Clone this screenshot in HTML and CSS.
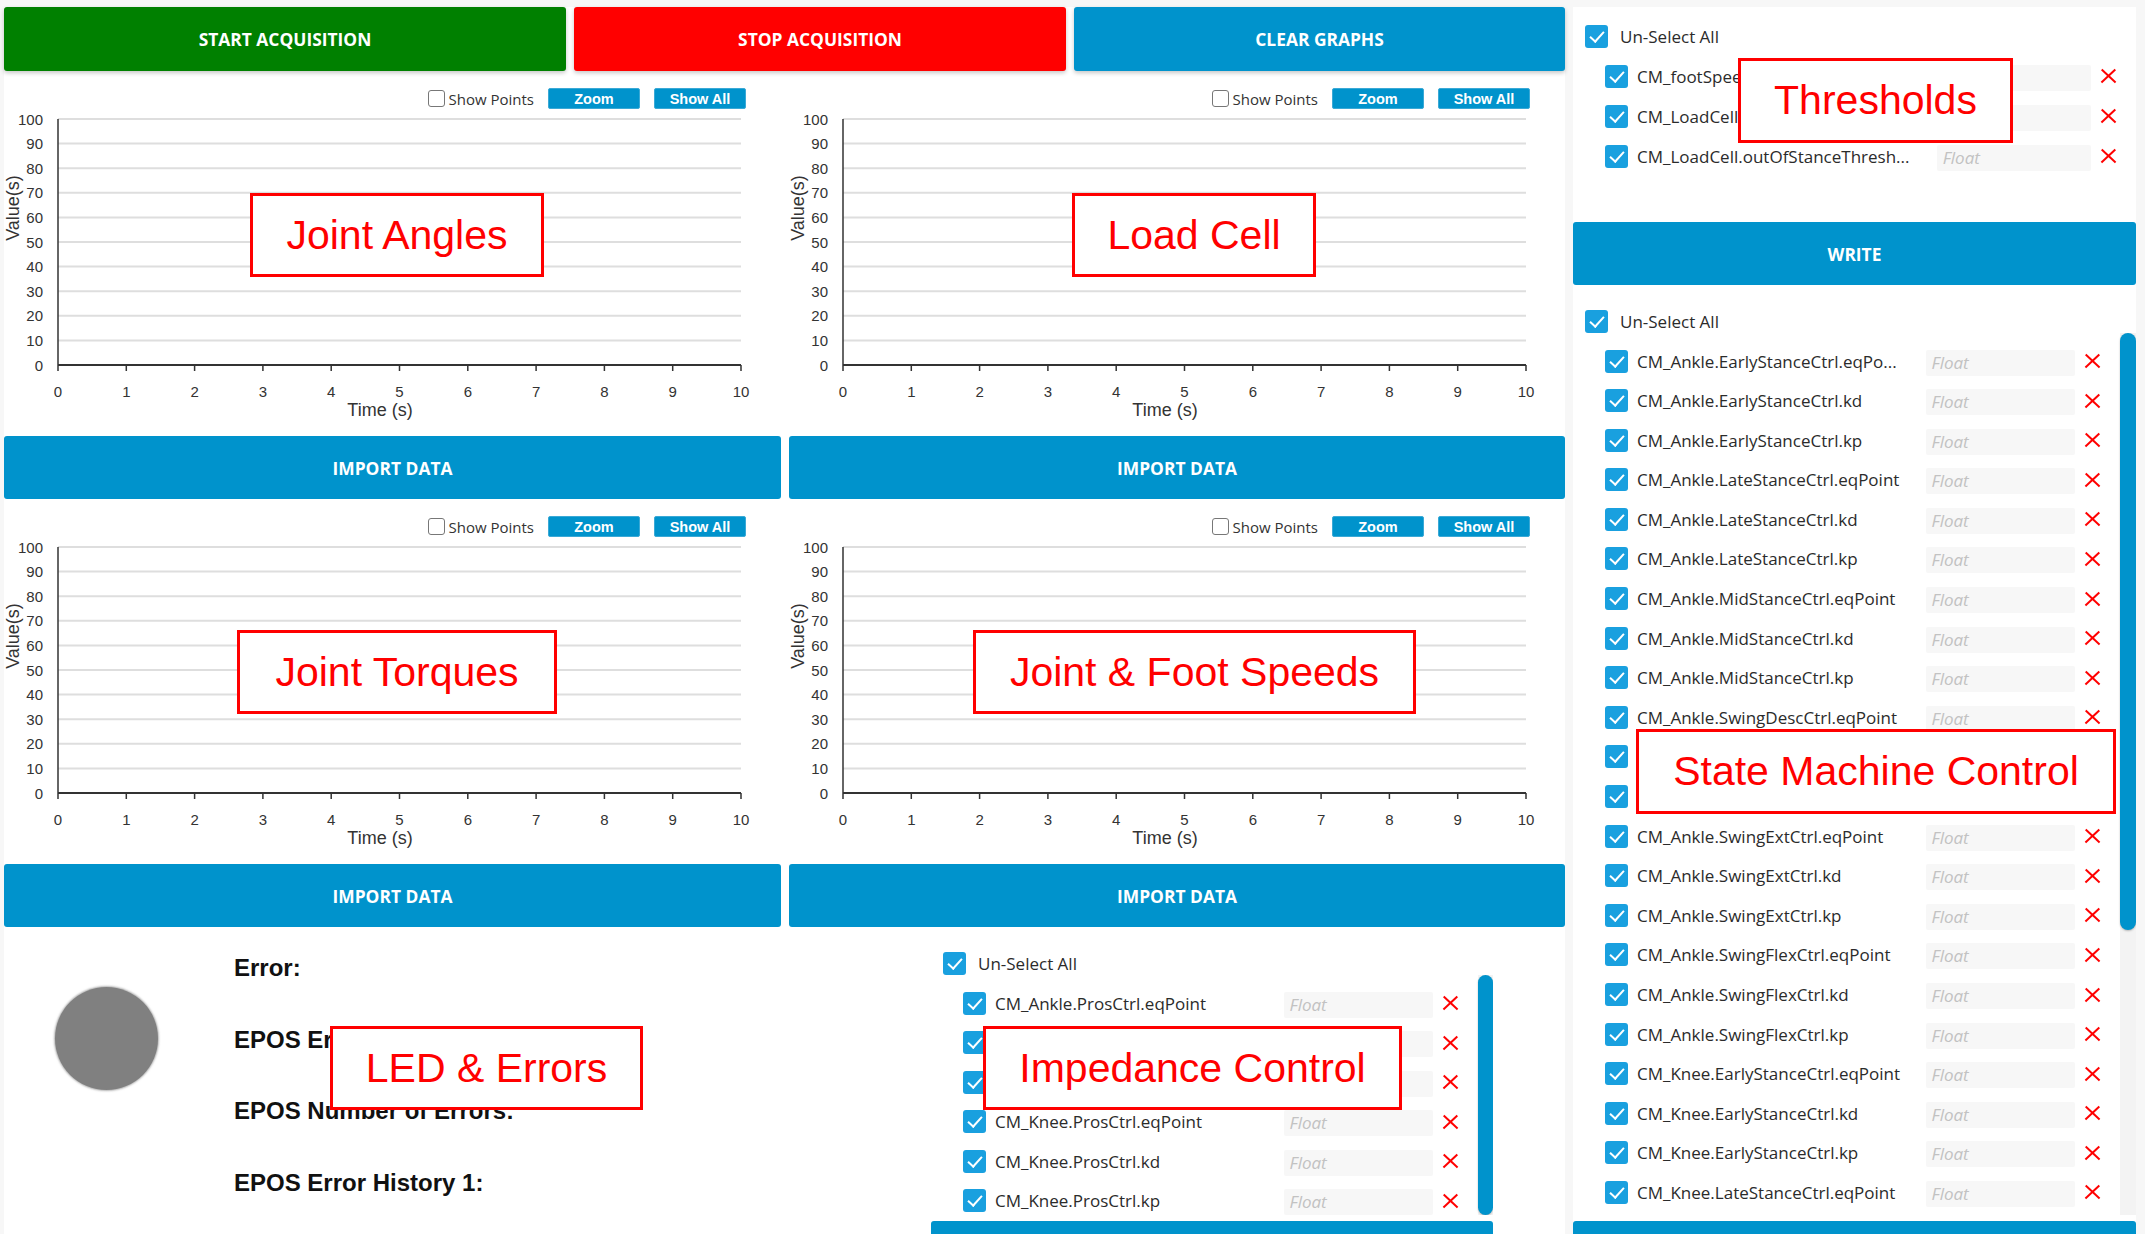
FILE: index.html
```html
<!DOCTYPE html>
<html lang="en">
<head>
<meta charset="utf-8">
<title>Acquisition Panel</title>
<link rel="stylesheet" href="styles.css">
</head>
<body>
<div class="app">
  <div class="left">
    <div class="topbar">
      <button class="btn top green w1">START ACQUISITION</button>
      <button class="btn top red w2">STOP ACQUISITION</button>
      <button class="btn top blue w3">CLEAR GRAPHS</button>
    </div>

    <div class="charts">
      <section class="cell">
        <div class="controls">
          <span class="sp-box"></span><span class="sp-label">Show Points</span>
          <button class="gbtn">Zoom</button><button class="gbtn">Show All</button>
        </div>
        <svg class="plot" width="777" height="327" viewBox="0 0 777 327">
          <path class="gridl" d="M54 10H737M54 34.6H737M54 59.2H737M54 83.8H737M54 108.4H737M54 133H737M54 157.6H737M54 182.2H737M54 206.8H737M54 231.4H737"/>
          <path class="yaxis" d="M54 10V256"/>
          <path class="xaxis" d="M54 256H737"/>
          <path class="ticks" d="M54 256V262M122.3 256V262M190.6 256V262M258.9 256V262M327.2 256V262M395.5 256V262M463.8 256V262M532.1 256V262M600.4 256V262M668.7 256V262M737 256V262"/>
          <g class="ylab"><text x="39" y="15.5">100</text><text x="39" y="40.1">90</text><text x="39" y="64.7">80</text><text x="39" y="89.3">70</text><text x="39" y="113.9">60</text><text x="39" y="138.5">50</text><text x="39" y="163.1">40</text><text x="39" y="187.7">30</text><text x="39" y="212.3">20</text><text x="39" y="236.9">10</text><text x="39" y="261.5">0</text></g>
          <g class="xlab"><text x="54" y="288">0</text><text x="122.3" y="288">1</text><text x="190.6" y="288">2</text><text x="258.9" y="288">3</text><text x="327.2" y="288">4</text><text x="395.5" y="288">5</text><text x="463.8" y="288">6</text><text x="532.1" y="288">7</text><text x="600.4" y="288">8</text><text x="668.7" y="288">9</text><text x="737" y="288">10</text></g>
          <text class="title" x="376" y="307">Time (s)</text>
          <text class="title" transform="translate(15 99) rotate(-90)">Value(s)</text>
        </svg>
        <button class="btn blue import">IMPORT DATA</button>
      </section>

      <section class="cell">
        <div class="controls">
          <span class="sp-box"></span><span class="sp-label">Show Points</span>
          <button class="gbtn">Zoom</button><button class="gbtn">Show All</button>
        </div>
        <svg class="plot" width="776" height="327" viewBox="0 0 776 327">
          <path class="gridl" d="M54 10H737M54 34.6H737M54 59.2H737M54 83.8H737M54 108.4H737M54 133H737M54 157.6H737M54 182.2H737M54 206.8H737M54 231.4H737"/>
          <path class="yaxis" d="M54 10V256"/>
          <path class="xaxis" d="M54 256H737"/>
          <path class="ticks" d="M54 256V262M122.3 256V262M190.6 256V262M258.9 256V262M327.2 256V262M395.5 256V262M463.8 256V262M532.1 256V262M600.4 256V262M668.7 256V262M737 256V262"/>
          <g class="ylab"><text x="39" y="15.5">100</text><text x="39" y="40.1">90</text><text x="39" y="64.7">80</text><text x="39" y="89.3">70</text><text x="39" y="113.9">60</text><text x="39" y="138.5">50</text><text x="39" y="163.1">40</text><text x="39" y="187.7">30</text><text x="39" y="212.3">20</text><text x="39" y="236.9">10</text><text x="39" y="261.5">0</text></g>
          <g class="xlab"><text x="54" y="288">0</text><text x="122.3" y="288">1</text><text x="190.6" y="288">2</text><text x="258.9" y="288">3</text><text x="327.2" y="288">4</text><text x="395.5" y="288">5</text><text x="463.8" y="288">6</text><text x="532.1" y="288">7</text><text x="600.4" y="288">8</text><text x="668.7" y="288">9</text><text x="737" y="288">10</text></g>
          <text class="title" x="376" y="307">Time (s)</text>
          <text class="title" transform="translate(15 99) rotate(-90)">Value(s)</text>
        </svg>
        <button class="btn blue import">IMPORT DATA</button>
      </section>

      <section class="cell">
        <div class="controls">
          <span class="sp-box"></span><span class="sp-label">Show Points</span>
          <button class="gbtn">Zoom</button><button class="gbtn">Show All</button>
        </div>
        <svg class="plot" width="777" height="327" viewBox="0 0 777 327">
          <path class="gridl" d="M54 10H737M54 34.6H737M54 59.2H737M54 83.8H737M54 108.4H737M54 133H737M54 157.6H737M54 182.2H737M54 206.8H737M54 231.4H737"/>
          <path class="yaxis" d="M54 10V256"/>
          <path class="xaxis" d="M54 256H737"/>
          <path class="ticks" d="M54 256V262M122.3 256V262M190.6 256V262M258.9 256V262M327.2 256V262M395.5 256V262M463.8 256V262M532.1 256V262M600.4 256V262M668.7 256V262M737 256V262"/>
          <g class="ylab"><text x="39" y="15.5">100</text><text x="39" y="40.1">90</text><text x="39" y="64.7">80</text><text x="39" y="89.3">70</text><text x="39" y="113.9">60</text><text x="39" y="138.5">50</text><text x="39" y="163.1">40</text><text x="39" y="187.7">30</text><text x="39" y="212.3">20</text><text x="39" y="236.9">10</text><text x="39" y="261.5">0</text></g>
          <g class="xlab"><text x="54" y="288">0</text><text x="122.3" y="288">1</text><text x="190.6" y="288">2</text><text x="258.9" y="288">3</text><text x="327.2" y="288">4</text><text x="395.5" y="288">5</text><text x="463.8" y="288">6</text><text x="532.1" y="288">7</text><text x="600.4" y="288">8</text><text x="668.7" y="288">9</text><text x="737" y="288">10</text></g>
          <text class="title" x="376" y="307">Time (s)</text>
          <text class="title" transform="translate(15 99) rotate(-90)">Value(s)</text>
        </svg>
        <button class="btn blue import">IMPORT DATA</button>
      </section>

      <section class="cell">
        <div class="controls">
          <span class="sp-box"></span><span class="sp-label">Show Points</span>
          <button class="gbtn">Zoom</button><button class="gbtn">Show All</button>
        </div>
        <svg class="plot" width="776" height="327" viewBox="0 0 776 327">
          <path class="gridl" d="M54 10H737M54 34.6H737M54 59.2H737M54 83.8H737M54 108.4H737M54 133H737M54 157.6H737M54 182.2H737M54 206.8H737M54 231.4H737"/>
          <path class="yaxis" d="M54 10V256"/>
          <path class="xaxis" d="M54 256H737"/>
          <path class="ticks" d="M54 256V262M122.3 256V262M190.6 256V262M258.9 256V262M327.2 256V262M395.5 256V262M463.8 256V262M532.1 256V262M600.4 256V262M668.7 256V262M737 256V262"/>
          <g class="ylab"><text x="39" y="15.5">100</text><text x="39" y="40.1">90</text><text x="39" y="64.7">80</text><text x="39" y="89.3">70</text><text x="39" y="113.9">60</text><text x="39" y="138.5">50</text><text x="39" y="163.1">40</text><text x="39" y="187.7">30</text><text x="39" y="212.3">20</text><text x="39" y="236.9">10</text><text x="39" y="261.5">0</text></g>
          <g class="xlab"><text x="54" y="288">0</text><text x="122.3" y="288">1</text><text x="190.6" y="288">2</text><text x="258.9" y="288">3</text><text x="327.2" y="288">4</text><text x="395.5" y="288">5</text><text x="463.8" y="288">6</text><text x="532.1" y="288">7</text><text x="600.4" y="288">8</text><text x="668.7" y="288">9</text><text x="737" y="288">10</text></g>
          <text class="title" x="376" y="307">Time (s)</text>
          <text class="title" transform="translate(15 99) rotate(-90)">Value(s)</text>
        </svg>
        <button class="btn blue import">IMPORT DATA</button>
      </section>
    </div>

    <div class="bottom">
      <div class="status">
        <div class="led"></div>
        <div class="errors">
          <div class="err">Error:</div>
          <div class="err">EPOS Error:</div>
          <div class="err">EPOS Number of Errors:</div>
          <div class="err">EPOS Error History 1:</div>
        </div>
      </div>
      <div class="imp-col">
        <div class="panel imp">
          <div class="head"><span class="cb"></span><span class="head-label">Un-Select All</span></div>
          <div class="list imp-list">
            <div class="items">
              <div class="row"><span class="cb"></span><span class="lbl">CM_Ankle.ProsCtrl.eqPoint</span><span class="inp">Float</span><span class="x"></span></div>
              <div class="row"><span class="cb"></span><span class="lbl">CM_Ankle.ProsCtrl.kd</span><span class="inp">Float</span><span class="x"></span></div>
              <div class="row"><span class="cb"></span><span class="lbl">CM_Ankle.ProsCtrl.kp</span><span class="inp">Float</span><span class="x"></span></div>
              <div class="row"><span class="cb"></span><span class="lbl">CM_Knee.ProsCtrl.eqPoint</span><span class="inp">Float</span><span class="x"></span></div>
              <div class="row"><span class="cb"></span><span class="lbl">CM_Knee.ProsCtrl.kd</span><span class="inp">Float</span><span class="x"></span></div>
              <div class="row"><span class="cb"></span><span class="lbl">CM_Knee.ProsCtrl.kp</span><span class="inp">Float</span><span class="x"></span></div>
            </div>
            <div class="track imp-track"><div class="thumb imp-thumb"></div></div>
          </div>
          <button class="btn blue write">WRITE</button>
        </div>
      </div>
    </div>
  </div>

  <div class="right">
    <div class="panel thr">
      <div class="head thr-head"><span class="cb"></span><span class="head-label">Un-Select All</span></div>
      <div class="list thr-list">
        <div class="items">
          <div class="row r40"><span class="cb"></span><span class="lbl">CM_footSpeed.threshold</span><span class="inp">Float</span><span class="x"></span></div>
          <div class="row r40"><span class="cb"></span><span class="lbl">CM_LoadCell.inStanceThreshold</span><span class="inp">Float</span><span class="x"></span></div>
          <div class="row r40"><span class="cb"></span><span class="lbl">CM_LoadCell.outOfStanceThresh...</span><span class="inp">Float</span><span class="x"></span></div>
        </div>
      </div>
    </div>
    <button class="btn blue write">WRITE</button>
    <div class="panel sm">
      <div class="head"><span class="cb"></span><span class="head-label">Un-Select All</span></div>
      <div class="list sm-list">
        <div class="items">
          <div class="row"><span class="cb"></span><span class="lbl">CM_Ankle.EarlyStanceCtrl.eqPo...</span><span class="inp">Float</span><span class="x"></span></div>
          <div class="row"><span class="cb"></span><span class="lbl">CM_Ankle.EarlyStanceCtrl.kd</span><span class="inp">Float</span><span class="x"></span></div>
          <div class="row"><span class="cb"></span><span class="lbl">CM_Ankle.EarlyStanceCtrl.kp</span><span class="inp">Float</span><span class="x"></span></div>
          <div class="row"><span class="cb"></span><span class="lbl">CM_Ankle.LateStanceCtrl.eqPoint</span><span class="inp">Float</span><span class="x"></span></div>
          <div class="row"><span class="cb"></span><span class="lbl">CM_Ankle.LateStanceCtrl.kd</span><span class="inp">Float</span><span class="x"></span></div>
          <div class="row"><span class="cb"></span><span class="lbl">CM_Ankle.LateStanceCtrl.kp</span><span class="inp">Float</span><span class="x"></span></div>
          <div class="row"><span class="cb"></span><span class="lbl">CM_Ankle.MidStanceCtrl.eqPoint</span><span class="inp">Float</span><span class="x"></span></div>
          <div class="row"><span class="cb"></span><span class="lbl">CM_Ankle.MidStanceCtrl.kd</span><span class="inp">Float</span><span class="x"></span></div>
          <div class="row"><span class="cb"></span><span class="lbl">CM_Ankle.MidStanceCtrl.kp</span><span class="inp">Float</span><span class="x"></span></div>
          <div class="row"><span class="cb"></span><span class="lbl">CM_Ankle.SwingDescCtrl.eqPoint</span><span class="inp">Float</span><span class="x"></span></div>
          <div class="row"><span class="cb"></span><span class="lbl">CM_Ankle.SwingDescCtrl.kd</span><span class="inp">Float</span><span class="x"></span></div>
          <div class="row"><span class="cb"></span><span class="lbl">CM_Ankle.SwingDescCtrl.kp</span><span class="inp">Float</span><span class="x"></span></div>
          <div class="row"><span class="cb"></span><span class="lbl">CM_Ankle.SwingExtCtrl.eqPoint</span><span class="inp">Float</span><span class="x"></span></div>
          <div class="row"><span class="cb"></span><span class="lbl">CM_Ankle.SwingExtCtrl.kd</span><span class="inp">Float</span><span class="x"></span></div>
          <div class="row"><span class="cb"></span><span class="lbl">CM_Ankle.SwingExtCtrl.kp</span><span class="inp">Float</span><span class="x"></span></div>
          <div class="row"><span class="cb"></span><span class="lbl">CM_Ankle.SwingFlexCtrl.eqPoint</span><span class="inp">Float</span><span class="x"></span></div>
          <div class="row"><span class="cb"></span><span class="lbl">CM_Ankle.SwingFlexCtrl.kd</span><span class="inp">Float</span><span class="x"></span></div>
          <div class="row"><span class="cb"></span><span class="lbl">CM_Ankle.SwingFlexCtrl.kp</span><span class="inp">Float</span><span class="x"></span></div>
          <div class="row"><span class="cb"></span><span class="lbl">CM_Knee.EarlyStanceCtrl.eqPoint</span><span class="inp">Float</span><span class="x"></span></div>
          <div class="row"><span class="cb"></span><span class="lbl">CM_Knee.EarlyStanceCtrl.kd</span><span class="inp">Float</span><span class="x"></span></div>
          <div class="row"><span class="cb"></span><span class="lbl">CM_Knee.EarlyStanceCtrl.kp</span><span class="inp">Float</span><span class="x"></span></div>
          <div class="row"><span class="cb"></span><span class="lbl">CM_Knee.LateStanceCtrl.eqPoint</span><span class="inp">Float</span><span class="x"></span></div>
          <div class="row"><span class="cb"></span><span class="lbl">CM_Knee.LateStanceCtrl.kd</span><span class="inp">Float</span><span class="x"></span></div>
        </div>
        <div class="track sm-track"><div class="thumb sm-thumb"></div></div>
      </div>
    </div>
    <button class="btn blue write">WRITE</button>
  </div>

  <div class="note n-ja">Joint Angles</div>
  <div class="note n-lc">Load Cell</div>
  <div class="note n-jt">Joint Torques</div>
  <div class="note n-js">Joint &amp; Foot Speeds</div>
  <div class="note n-led">LED &amp; Errors</div>
  <div class="note n-imp">Impedance Control</div>
  <div class="note n-thr">Thresholds</div>
  <div class="note n-sm">State Machine Control</div>
</div>
</body>
</html>
```

FILE: styles.css
```css
* { box-sizing: border-box; }
html, body { margin: 0; padding: 0; }
body {
  width: 2145px;
  height: 1234px;
  overflow: hidden;
  background: #f7f7f7;
  font-family: "Open Sans", "Noto Sans", sans-serif;
  color: #2b2b2b;
}
.app {
  position: relative;
  display: grid;
  grid-template-columns: 1561px 563px;
  column-gap: 8px;
  padding: 7px 0 0 4px;
  height: 1234px;
  overflow: hidden;
}

/* buttons */
.btn {
  border: 0;
  margin: 0;
  padding: 0;
  border-radius: 3px;
  color: #fff;
  font-family: "Open Sans", "Noto Sans", sans-serif;
  font-weight: 700;
  font-size: 17.4px;
  display: flex;
  align-items: center;
  justify-content: center;
  flex: none;
}
.green { background: #008000; }
.red { background: #ff0000; }
.blue { background: #0093cc; }
.top { height: 64px; box-shadow: 0 2px 4px rgba(0,0,0,.22); }
.w1 { width: 562px; }
.w2 { width: 492px; }
.w3 { width: 491px; }

.left { display: flex; flex-direction: column; background: #fff; }
.topbar { display: flex; gap: 8px; height: 64px; flex: none; }

/* charts */
.charts {
  display: grid;
  grid-template-columns: 777px 776px;
  column-gap: 8px;
  flex: none;
}
.cell { display: flex; flex-direction: column; height: 428px; }
.controls {
  margin-top: 17px;
  height: 21px;
  display: flex;
  justify-content: flex-end;
  align-items: center;
  padding-right: 35px;
  flex: none;
}
.sp-box {
  width: 17px;
  height: 17px;
  border: 1.5px solid #777;
  border-radius: 3px;
  background: #fff;
}
.sp-label {
  margin-left: 4px;
  margin-right: 14px;
  font-size: 15px;
  color: #333;
}
.gbtn {
  width: 92px;
  height: 21px;
  margin: 0;
  padding: 0;
  background: #0093cc;
  border: 1px solid #3aa9d6;
  border-radius: 2px;
  color: #fff;
  font-family: "Liberation Sans", Arial, sans-serif;
  font-weight: 700;
  font-size: 14.5px;
}
.gbtn + .gbtn { margin-left: 14px; }
.plot { display: block; flex: none; overflow: visible; }
.gridl { stroke: #dedede; stroke-width: 2; fill: none; }
.yaxis { stroke: #333; stroke-width: 1.5; fill: none; }
.xaxis { stroke: #333; stroke-width: 2; fill: none; }
.ticks { stroke: #333; stroke-width: 1.5; fill: none; }
.plot text { font-family: "Liberation Sans", Arial, sans-serif; fill: #333; }
.ylab text { font-size: 15px; text-anchor: end; }
.xlab text { font-size: 15px; text-anchor: middle; }
.plot .title { font-size: 18px; text-anchor: middle; }
.import { height: 63px; width: 100%; }

/* bottom */
.bottom {
  display: grid;
  grid-template-columns: 777px 776px;
  column-gap: 8px;
  flex: 1;
}
.status { display: flex; padding-left: 51px; }
.led {
  width: 103px;
  height: 103px;
  margin-top: 60px;
  border-radius: 50%;
  background: #808080;
  box-shadow: 0 0 2px 1px rgba(128,128,128,.6);
  flex: none;
}
.errors { margin-left: 76px; padding-top: 5px; display: flex; flex-direction: column; }
.err {
  height: 71.7px;
  line-height: 71.7px;
  font-family: "Liberation Sans", Arial, sans-serif;
  font-weight: 700;
  font-size: 24px;
  color: #111;
  white-space: nowrap;
}
.imp-col { padding-left: 142px; }

/* panels */
.panel { display: flex; flex-direction: column; }
.imp { width: 562px; }
.head {
  display: flex;
  align-items: center;
  padding-top: 25px;
  padding-left: 12px;
  height: 48px;
  flex: none;
}
.thr-head { padding-top: 18px; height: 41px; }
.head-label { margin-left: 12px; font-size: 17px; color: #2b2b2b; }
.cb {
  position: relative;
  width: 23px;
  height: 23px;
  border-radius: 3px;
  background: #19a0df;
  flex: none;
}
.cb::after {
  content: "";
  position: absolute;
  left: 8px;
  top: 3px;
  width: 6px;
  height: 12px;
  border: solid #fff;
  border-width: 0 2.5px 2.5px 0;
  transform: rotate(42deg);
}
.list { display: flex; flex: none; overflow: hidden; }
.items { flex: 1; min-width: 0; padding-top: 16px; padding-left: 32px; overflow: hidden; }
.imp-list { height: 240px; }
.sm-list { height: 882px; }
.thr-list { height: 174px; }
.row {
  display: flex;
  align-items: center;
  height: 24px;
  margin-bottom: 15.6px;
  padding-right: 20px;
}
.r40 { margin-bottom: 16px; }
.lbl {
  flex: 1;
  min-width: 0;
  margin-left: 9px;
  padding-right: 12px;
  font-size: 17px;
  color: #2b2b2b;
  white-space: nowrap;
  overflow: hidden;
  text-overflow: ellipsis;
}
.inp {
  width: 30.2%;
  flex: none;
  height: 26px;
  margin-top: 3px;
  padding-left: 6px;
  background: #f7f7f7;
  border-radius: 2px;
  font-size: 17px;
  font-style: italic;
  line-height: 26px;
  color: #c2c2c2;
}
.x { position: relative; width: 15px; height: 15px; margin-left: 10px; flex: none; }
.x::before, .x::after {
  content: "";
  position: absolute;
  left: -2px;
  top: 6.5px;
  width: 19px;
  height: 2.4px;
  background: #ff0000;
  transform: rotate(43deg);
}
.x::after { transform: rotate(-43deg); }
.track { flex: none; background: #f3f3f3; }
.imp-track { width: 15px; }
.sm-track { width: 16px; }
.thumb { background: #0093cc; border-radius: 8px; box-shadow: 0 1px 2px rgba(0,0,0,.25); }
.imp-thumb { height: 240px; }
.sm-thumb { height: 597px; }
.write { height: 63px; width: 100%; }
.imp .write { margin-top: 6px; }

.right { display: flex; flex-direction: column; background: #fff; }
.right > .sm + .write { margin-top: 6px; }

/* annotations */
.note {
  position: absolute;
  height: 84px;
  border: 3px solid #ff0000;
  background: #fff;
  color: #ff0000;
  font-family: "Liberation Sans", Arial, sans-serif;
  font-size: 41px;
  display: flex;
  align-items: center;
  justify-content: center;
  white-space: nowrap;
}
.n-ja { left: 250px; top: 193px; width: 294px; }
.n-lc { left: 1072px; top: 193px; width: 244px; }
.n-jt { left: 237px; top: 630px; width: 320px; }
.n-js { left: 973px; top: 630px; width: 443px; }
.n-led { left: 330px; top: 1026px; width: 313px; }
.n-imp { left: 983px; top: 1026px; width: 419px; }
.n-thr { left: 1738px; top: 58px; width: 275px; height: 85px; }
.n-sm { left: 1636px; top: 729px; width: 480px; height: 85px; }
```
